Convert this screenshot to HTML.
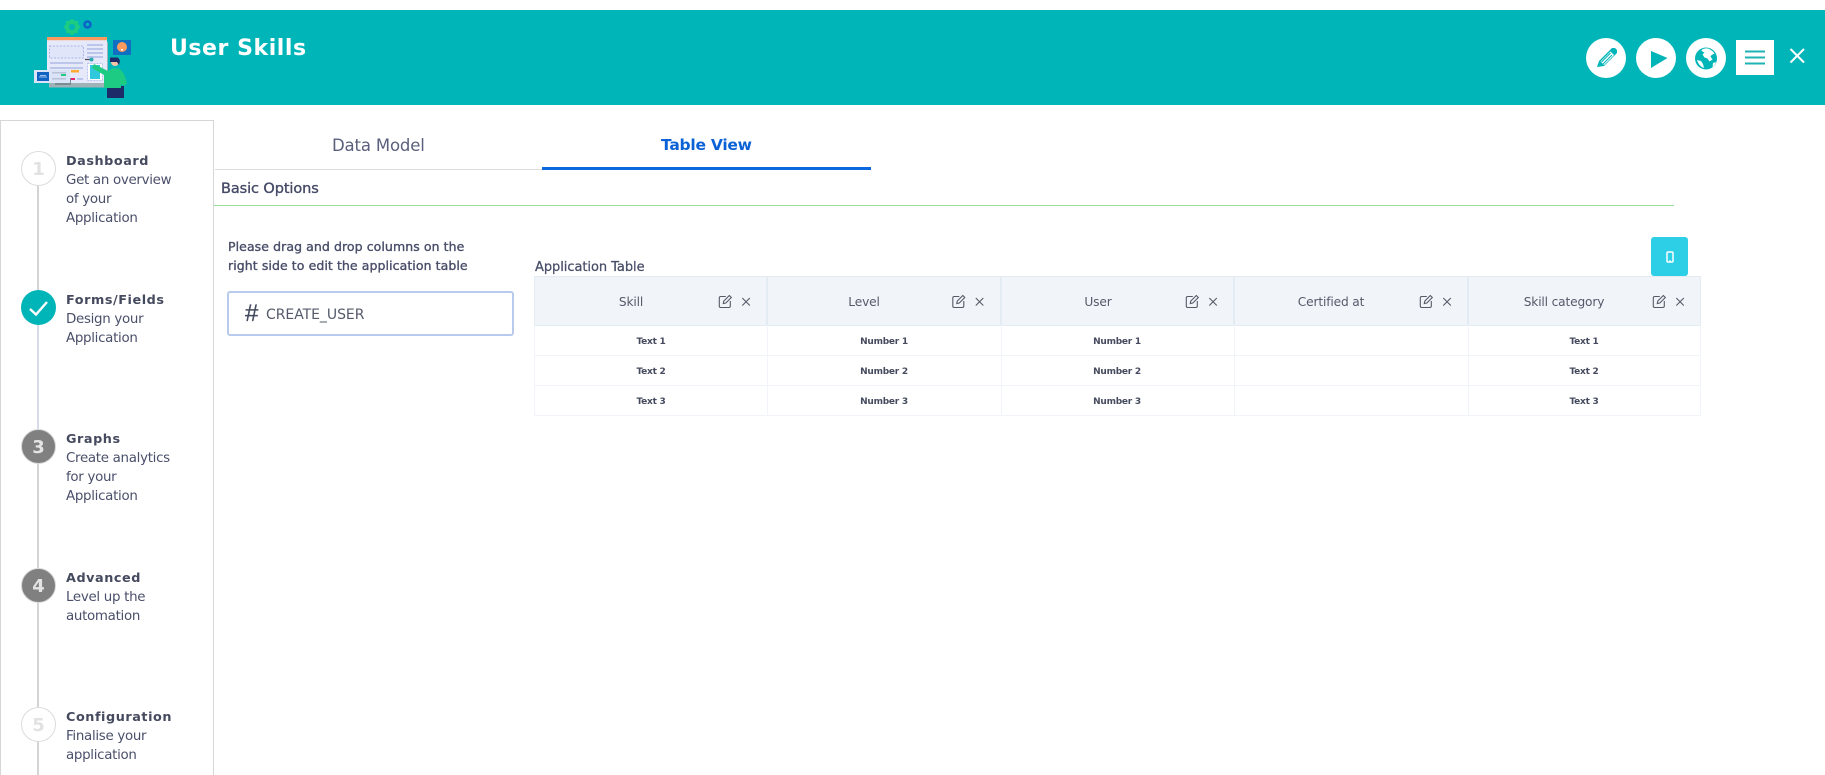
<!DOCTYPE html>
<html><head><meta charset="utf-8"><title>User Skills</title>
<style>
*{box-sizing:border-box}
html,body{margin:0;padding:0;width:1825px;height:775px;overflow:hidden;background:#fff;font-family:"DejaVu Sans","Liberation Sans",sans-serif;color:#4a4f6a}
.a{position:absolute;white-space:nowrap}
.hdr{left:0;top:10px;width:1825px;height:95px;background:#00b5b8}
.title{left:170px;top:32.500px;font-size:22px;font-weight:700;color:#fff;line-height:32px;letter-spacing:.55px}
.side{left:0;top:120px;width:214px;height:655px;border:1px solid #d6d6d6;border-bottom:0}
.ln{left:37px;width:2px}
.c{left:21px;width:35px;height:35px;border-radius:50%;text-align:center;font-weight:700;font-size:18px;line-height:35px}
.c.w{background:#fff;border:1px solid #dcdcdc;color:#e2e2e2}
.c.g{background:#808080;border:1px solid #d8d8d8;color:#e4e4e4}
.c.t{background:#00b5b8}
.st{left:66px;font-size:13.4px;line-height:19px;color:#4a4f6a;letter-spacing:-.3px}
.st b{display:block;font-size:12.8px;letter-spacing:.55px;color:#454a5e}
.tab{font-size:16.5px;line-height:24px;top:134px}
.cellh{font-size:12.2px;line-height:18px;color:#555a6a;top:293px;transform:translateX(-50%);letter-spacing:-.15px}
.cell{font-size:9px;font-weight:700;line-height:14px;color:#454a5e;transform:translateX(-50%);letter-spacing:-.25px}
</style></head><body>

<div class="a hdr"></div>
<svg class="a" style="left:0;top:0" width="170" height="105" viewBox="0 0 170 105">
  <g fill="none" stroke="#1ecb83">
    <circle cx="72" cy="27" r="5" stroke-width="4"/>
    <path d="M72 19v16M64 27h16M66.3 21.3l11.4 11.4M77.7 21.3L66.3 32.7" stroke-width="2.4"/>
  </g>
  <circle cx="72" cy="27" r="3" fill="#00b5b8"/>
  <circle cx="87.500" cy="24.500" r="3" fill="none" stroke="#0f62c8" stroke-width="2.6"/>
  <rect x="49" y="42" width="59" height="45.500" fill="#9fb2b8"/>
  <rect x="47" y="37" width="60" height="46" fill="#e6e9fa"/>
  <rect x="47" y="37" width="60" height="3.200" fill="#ff9a5e"/>
  <rect x="49.500" y="46" width="34" height="12" fill="#e0e5fa" stroke="#a9b6e6" stroke-dasharray="2 1.500"/>
  <g fill="#bcc6ea">
    <rect x="87" y="44" width="16" height="2"/><rect x="87" y="48" width="16" height="2"/><rect x="87" y="52" width="16" height="2"/><rect x="87" y="56" width="16" height="2"/>
    <rect x="50" y="62" width="33" height="2"/><rect x="50" y="67" width="33" height="2"/>
  </g>
  <rect x="71" y="70" width="8" height="2.500" fill="#ffaa33"/>
  <rect x="70" y="78" width="5" height="2" fill="#e5286e"/>
  <rect x="77" y="78" width="6" height="2" fill="#bcc6ea"/>
  <rect x="87.500" y="63.500" width="15" height="17" fill="#fff" stroke="#b7c4ee" stroke-dasharray="2 1"/>
  <rect x="90" y="65" width="10" height="14" fill="#2fc8dc"/>
  <rect x="55" y="78" width="16" height="7" fill="#7c8c94"/>
  <rect x="34" y="70" width="36" height="13" fill="#dbe3f6"/>
  <rect x="37" y="72" width="12" height="9" fill="#0f62c0"/>
  <path d="M39 77h8M40 75.500h6" stroke="#cfe3ff" stroke-width=".8"/>
  <rect x="52" y="72" width="14" height="1.500" fill="#b7c2d8"/><rect x="61" y="74" width="5" height="2" fill="#1ecb83"/>
  <rect x="52" y="78" width="14" height="1.500" fill="#b7c2d8"/>
  <rect x="113" y="40" width="18" height="15" fill="#0f6fc0"/>
  <circle cx="122" cy="47" r="5" fill="#ff9a5e"/>
  <rect x="121" y="49" width="2" height="1.500" fill="#fff"/>
  <rect x="107" y="86" width="17" height="12" fill="#1d2b69"/>
  <path d="M94 64l14 7 5-3 7 1 4 5 3 9-3 3-3-2v4h-17V75L92 68z" fill="#1ecb83"/>
  <circle cx="115" cy="62" r="4" fill="#f5c3a6"/>
  <path d="M110 57.500h8l2 3-1 4.500-2-3h-7z" fill="#1d2b69"/>
  <path d="M85 59.500h6" stroke="#445" stroke-width="1.200"/><circle cx="91.500" cy="59.500" r="2" fill="#2fa8b0"/>
</svg>
<div class="a title">User Skills</div>

<svg class="a" style="left:1586px;top:30px" width="239" height="60" viewBox="1586 30 239 60">
  <circle cx="1606" cy="58" r="20" fill="#fff"/>
  <circle cx="1656" cy="58" r="20" fill="#fff"/>
  <circle cx="1706" cy="58" r="20" fill="#fff"/>
  <path d="M1597 67l2-6 13-13 3 0 2 2 0 3-13 13z" fill="#00b5b8"/>
  <path d="M1600.500 61.500l10-10 3.500 3.500-10 10z" fill="#fff"/>
  <path d="M1601.500 62l9-9M1603 64l9-9" stroke="#00b5b8" stroke-width="1"/>
  <path d="M1651 51v17l16.500-10z" fill="#00b5b8"/>
  <circle cx="1706" cy="58.500" r="11" fill="#00b5b8"/>
  <path d="M1702 49.500c3-1.500 6-1.500 8 0 2 1 3 2 4.500 4-1.500 1-3 1-4 3l2 3-3 2-2-3-3-1-2-3 2-2-3-1.500zM1697 60l4 1 2 3 1 4c-3-1-6-4-7-8zM1713 63l3-1c-.5 2-2 4-3.500 5z" fill="#fff"/>
  <rect x="1736" y="40" width="38" height="35" fill="#fff"/>
  <path d="M1745 51.500h20M1745 57.500h20M1745 63.500h20" stroke="#1fb3b5" stroke-width="2"/>
  <path d="M1790.500 49l13.500 13.500M1804 49l-13.500 13.500" stroke="#fff" stroke-width="2"/>
</svg>

<div class="a side"></div>
<div class="a ln" style="top:185px;height:106px;background:#d4d4d4"></div>
<div class="a ln" style="top:324px;height:106px;background:#d8dcea"></div>
<div class="a ln" style="top:463px;height:105px;background:#d4d4d4"></div>
<div class="a ln" style="top:602px;height:105px;background:#d4d4d4"></div>
<div class="a ln" style="top:741px;height:34px;background:#d4d4d4"></div>

<div class="a c w" style="top:151px">1</div>
<div class="a c t" style="top:290px"><svg width="35" height="35" viewBox="0 0 35 35" style="display:block"><path d="M9 19l6 5.500L26 12" fill="none" stroke="#fff" stroke-width="2.400"/></svg></div>
<div class="a c g" style="top:429px">3</div>
<div class="a c g" style="top:568px">4</div>
<div class="a c w" style="top:707px">5</div>

<div class="a st" style="top:152px"><b>Dashboard</b>Get an overview<br>of your<br>Application</div>
<div class="a st" style="top:291px"><b>Forms/Fields</b>Design your<br>Application</div>
<div class="a st" style="top:430px"><b>Graphs</b>Create analytics<br>for your<br>Application</div>
<div class="a st" style="top:569px"><b>Advanced</b>Level up the<br>automation</div>
<div class="a st" style="top:708px"><b>Configuration</b>Finalise your<br>application</div>

<div class="a tab" style="left:332px;color:#5a5f7d;letter-spacing:-.15px">Data Model</div>
<div class="a tab" style="left:661px;top:133px;color:#0a62d6;font-weight:700;font-size:15.500px;letter-spacing:-.25px">Table View</div>
<div class="a" style="left:215px;top:169px;width:327px;height:1px;background:#dedede"></div>
<div class="a" style="left:542px;top:167px;width:329px;height:3px;background:#0a67dd"></div>

<div class="a" style="left:221px;top:179px;font-size:14.500px;line-height:20px;color:#454a66;letter-spacing:-.1px;-webkit-text-stroke:.35px #454a66">Basic Options</div>
<div class="a" style="left:214px;top:205px;width:1460px;height:1px;background:#9be09b"></div>

<div class="a" style="left:228px;top:237px;font-size:12.500px;line-height:19px;color:#484d68;letter-spacing:.08px;-webkit-text-stroke:.35px #484d68">Please drag and drop columns on the<br>right side to edit the application table</div>
<div class="a" style="left:227px;top:291px;width:287px;height:45px;border:2px solid #b9cbec;border-radius:3px;background:#fff"></div>
<div class="a" style="left:245px;top:301px;font-size:24px;line-height:26px;color:#454a5e;font-family:'Liberation Sans',sans-serif;-webkit-text-stroke:.3px #454a5e">#</div>
<div class="a" style="left:266px;top:305px;font-size:14px;line-height:21px;color:#555a6a;letter-spacing:-.05px">CREATE_USER</div>

<div class="a" style="left:535px;top:259px;font-size:13px;line-height:18px;color:#484d68;letter-spacing:-.05px;-webkit-text-stroke:.25px #484d68">Application Table</div>

<div class="a" style="left:1651px;top:237px;width:37px;height:39px;background:#2dcfe6;border-radius:3px"></div>
<svg class="a" style="left:1666px;top:251px" width="8" height="12" viewBox="0 0 8 12"><rect x="1" y="1" width="6" height="10" rx="1" fill="none" stroke="#fff" stroke-width="1.500"/><rect x="3" y="9.500" width="2" height="1.500" fill="#fff"/></svg>

<svg class="a" style="left:530px;top:270px" width="1180" height="150" viewBox="530 270 1180 150">
  <rect x="534.500" y="276.500" width="1166" height="49" fill="#f1f4f8" stroke="#e3ebf3"/>
  <g stroke="#e3ebf3" stroke-width="2"><path d="M767 277v48M1001 277v48M1234 277v48M1468 277v48"/></g>
  <path d="M534.500 325v90M1700.500 325v90M534 355.500h1167M534 385.500h1167M534 415.500h1167M767.500 325v90M1001.500 325v90M1234.500 325v90M1468.500 325v90" stroke="#f1f4f8" fill="none"/>
  <defs><g id="ic" fill="none" stroke="#555a66" stroke-width="1.100"><path d="M725.500 296.500h-5a1.500 1.500 0 0 0-1.500 1.500v8a1.500 1.500 0 0 0 1.500 1.500h8a1.500 1.500 0 0 0 1.500-1.500v-5"/><path d="M723 303.500l.5-2.500 5.500-5.500 2 2-5.500 5.500z"/><path d="M742 298l7.500 7.500M749.500 298L742 305.500"/></g></defs>
  <use href="#ic" x="0.300"/><use href="#ic" x="233.800"/><use href="#ic" x="467.300"/><use href="#ic" x="701.300"/><use href="#ic" x="934.300"/>
</svg>

<div class="a cellh" style="left:631px">Skill</div>
<div class="a cellh" style="left:864px">Level</div>
<div class="a cellh" style="left:1098px">User</div>
<div class="a cellh" style="left:1331px">Certified at</div>
<div class="a cellh" style="left:1564px">Skill category</div>

<div class="a cell" style="left:651px;top:335px">Text 1</div>
<div class="a cell" style="left:651px;top:365px">Text 2</div>
<div class="a cell" style="left:651px;top:395px">Text 3</div>
<div class="a cell" style="left:884px;top:335px">Number 1</div>
<div class="a cell" style="left:884px;top:365px">Number 2</div>
<div class="a cell" style="left:884px;top:395px">Number 3</div>
<div class="a cell" style="left:1117px;top:335px">Number 1</div>
<div class="a cell" style="left:1117px;top:365px">Number 2</div>
<div class="a cell" style="left:1117px;top:395px">Number 3</div>
<div class="a cell" style="left:1584px;top:335px">Text 1</div>
<div class="a cell" style="left:1584px;top:365px">Text 2</div>
<div class="a cell" style="left:1584px;top:395px">Text 3</div>

</body></html>
